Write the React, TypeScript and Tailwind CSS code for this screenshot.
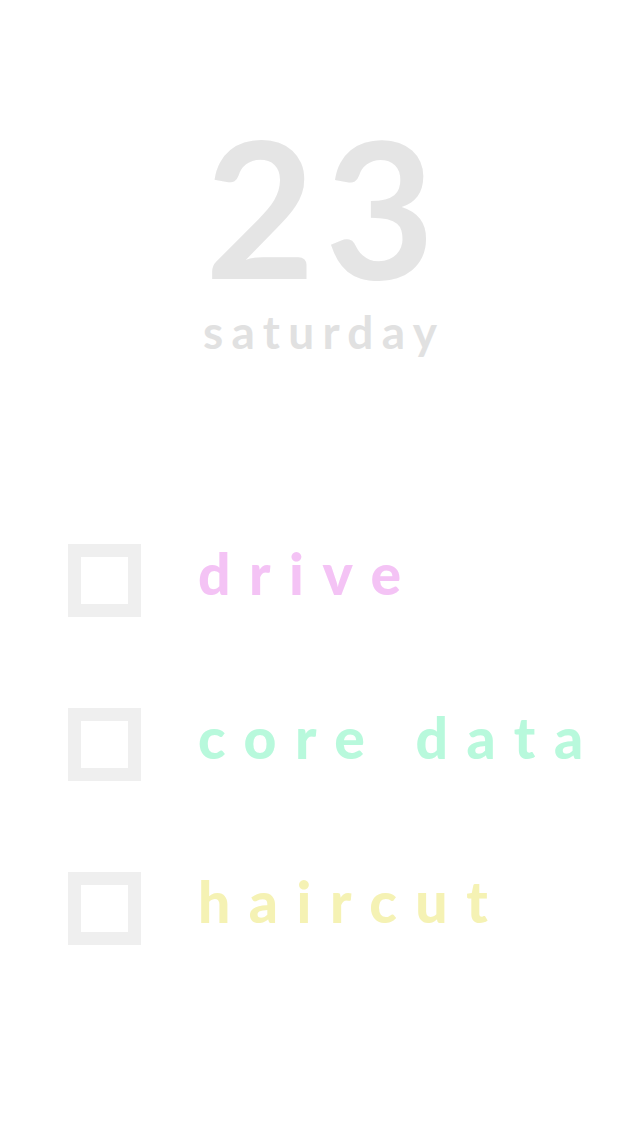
const tasks = [
  { label: 'drive', color: 'text-[#f4c3f5]' },
  { label: 'core data', color: 'text-[#b8f9dc]' },
  { label: 'haircut', color: 'text-[#f5f2b4]' },
]

export default function App() {
  return (
    <div
      className="w-[640px] h-[1136px] bg-white flex flex-col"
      style={{ fontFamily: 'Lato, "Noto Sans", sans-serif' }}
    >
      <div className="flex flex-col items-center pt-[110px]">
        <div className="text-[190px] leading-[190px] font-bold text-[#e5e5e5] tracking-[0.05em] pl-[0.05em]">23</div>
        <div className="text-[46px] leading-[52px] font-bold text-[#e1e1e1] tracking-[0.18em] pl-[0.18em] mt-[6px]">
          saturday
        </div>
      </div>

      <div className="flex flex-col gap-[91px] pl-[68px] mt-[186px]">
        {tasks.map((t) => (
          <div key={t.label} className="flex items-start gap-[57px] h-[73px]">
            <div className="w-[73px] h-[73px] border-[13px] border-[#efefef] shrink-0" />
            <span
              className={`text-[57px] leading-[73px] -mt-[7px] font-black tracking-[0.325em] whitespace-nowrap ${t.color}`}
            >
              {t.label}
            </span>
          </div>
        ))}
      </div>
    </div>
  )
}
